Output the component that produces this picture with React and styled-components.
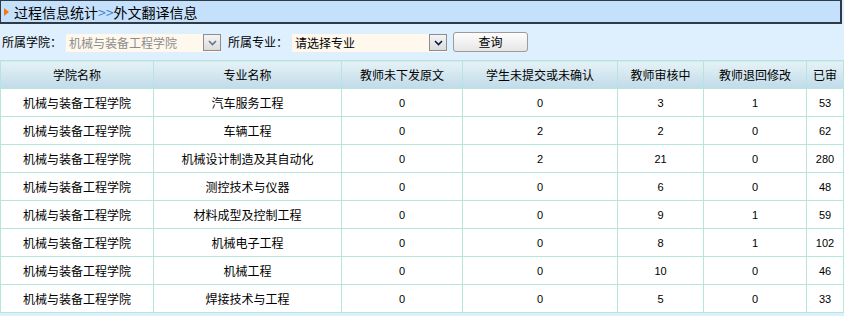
import React from 'react';
import styled, { createGlobalStyle } from 'styled-components';

const GlobalStyle = createGlobalStyle`
  html, body {
    margin: 0;
    padding: 0;
    overflow: hidden;
    background: #deeffe;
    font-family: "Liberation Sans", "Noto Sans CJK SC", sans-serif;
    font-size: 12px;
    color: #000;
  }
`;

const Page = styled.div`
  width: 844px;
  height: 316px;
  overflow: hidden;
  background: #deeffe;
`;

const TitleBar = styled.div`
  box-sizing: border-box;
  width: 842px;
  height: 24px;
  display: flex;
  align-items: center;
  gap: 5px;
  padding-left: 3px;
  background: #c5e0fa;
  border-style: solid;
  border-color: #2e3a46;
  border-width: 1px 2px 2px 1px;
  font-family: "Noto Sans CJK SC", sans-serif;
  font-size: 14px;
  line-height: 20px;
`;

const Arrow = styled.span`
  width: 0;
  height: 0;
  border-top: 4px solid transparent;
  border-bottom: 4px solid transparent;
  border-left: 5px solid #f07a10;
  margin-top: 1px;
`;

const Sep = styled.span`
  color: #3b7fd0;
`;

const FilterBar = styled.div`
  height: 36px;
  display: flex;
  align-items: center;
  padding-left: 2px;
`;

const Label = styled.span`
  font-family: "Noto Sans CJK SC", sans-serif;
  font-size: 12px;
  line-height: 16px;
  margin-right: 4px;
`;

const Select = styled.div`
  box-sizing: border-box;
  width: 155px;
  height: 18px;
  display: flex;
  align-items: center;
  justify-content: space-between;
  background: #fff8ec;
  margin-right: ${(p) => p.$gap}px;
  margin-top: 1px;
`;

const SelectText = styled.span`
  font-family: "Noto Sans CJK SC", sans-serif;
  font-size: 12px;
  line-height: 16px;
  padding-left: 3px;
  color: ${(p) => (p.$disabled ? '#8c8c8c' : '#000')};
`;

const DropBtn = styled.span`
  box-sizing: border-box;
  width: 18px;
  height: 17px;
  display: flex;
  align-items: center;
  justify-content: center;
  border: 1px solid #8d8d8d;
  background: linear-gradient(#f4f4f4, #dcdcdc);
`;

const QueryButton = styled.button`
  box-sizing: border-box;
  width: 75px;
  height: 20px;
  padding: 0;
  border: 1px solid #9b9b9b;
  border-radius: 3px;
  background: linear-gradient(#fdfdfd, #e6e6e6);
  font-family: "Noto Sans CJK SC", sans-serif;
  font-size: 12px;
  line-height: 16px;
  color: #000;
`;

const Table = styled.table`
  border-collapse: collapse;
  table-layout: fixed;
  width: 843px;
  border-top: 1px solid #b4e6dc;
`;

const HeadCell = styled.th`
  height: 27px;
  padding: 0;
  font-weight: normal;
  font-family: "Noto Sans CJK SC", sans-serif;
  font-size: 12px;
  white-space: nowrap;
  border: 1px solid #b4e6dc;
  background: linear-gradient(#e6f2f6, #c0dbea);
`;

const Cell = styled.td`
  height: 27px;
  padding: 0;
  text-align: center;
  white-space: nowrap;
  background: #fff;
  border: 1px solid #b4e6dc;
  font-family: ${(p) =>
    p.$num ? '"Liberation Sans", sans-serif' : '"Noto Sans CJK SC", sans-serif'};
  font-size: ${(p) => (p.$num ? 11 : 12)}px;
`;

const columns = [
  { title: '学院名称', width: 153 },
  { title: '专业名称', width: 188 },
  { title: '教师未下发原文', width: 121 },
  { title: '学生未提交或未确认', width: 155 },
  { title: '教师审核中', width: 86 },
  { title: '教师退回修改', width: 103 },
  { title: '已审', width: 37 },
];

const rows = [
  ['汽车服务工程', 0, 0, 3, 1, 53],
  ['车辆工程', 0, 2, 2, 0, 62],
  ['机械设计制造及其自动化', 0, 2, 21, 0, 280],
  ['测控技术与仪器', 0, 0, 6, 0, 48],
  ['材料成型及控制工程', 0, 0, 9, 1, 59],
  ['机械电子工程', 0, 0, 8, 1, 102],
  ['机械工程', 0, 0, 10, 0, 46],
  ['焊接技术与工程', 0, 0, 5, 0, 33],
];

const Chevron = ({ color }) => (
  <svg width="9" height="6" viewBox="0 0 9 6">
    <path d="M1 1 L4.5 4.5 L8 1" fill="none" stroke={color} strokeWidth="1.6" />
  </svg>
);

const App = () => (
  <Page>
    <GlobalStyle />
    <TitleBar>
      <Arrow />
      <span>
        过程信息统计<Sep>&gt;&gt;</Sep>外文翻译信息
      </span>
    </TitleBar>
    <FilterBar>
      <Label>所属学院：</Label>
      <Select $gap={7}>
        <SelectText $disabled>机械与装备工程学院</SelectText>
        <DropBtn>
          <Chevron color="#6a7480" />
        </DropBtn>
      </Select>
      <Label>所属专业：</Label>
      <Select $gap={6}>
        <SelectText>请选择专业</SelectText>
        <DropBtn>
          <Chevron color="#0b1a4a" />
        </DropBtn>
      </Select>
      <QueryButton type="button">查询</QueryButton>
    </FilterBar>
    <Table>
      <colgroup>
        {columns.map((c) => (
          <col key={c.title} style={{ width: c.width }} />
        ))}
      </colgroup>
      <thead>
        <tr>
          {columns.map((c) => (
            <HeadCell key={c.title}>{c.title}</HeadCell>
          ))}
        </tr>
      </thead>
      <tbody>
        {rows.map(([major, ...nums]) => (
          <tr key={major}>
            <Cell>机械与装备工程学院</Cell>
            <Cell>{major}</Cell>
            {nums.map((n, i) => (
              <Cell key={i} $num>
                {n}
              </Cell>
            ))}
          </tr>
        ))}
      </tbody>
    </Table>
  </Page>
);

export default App;
